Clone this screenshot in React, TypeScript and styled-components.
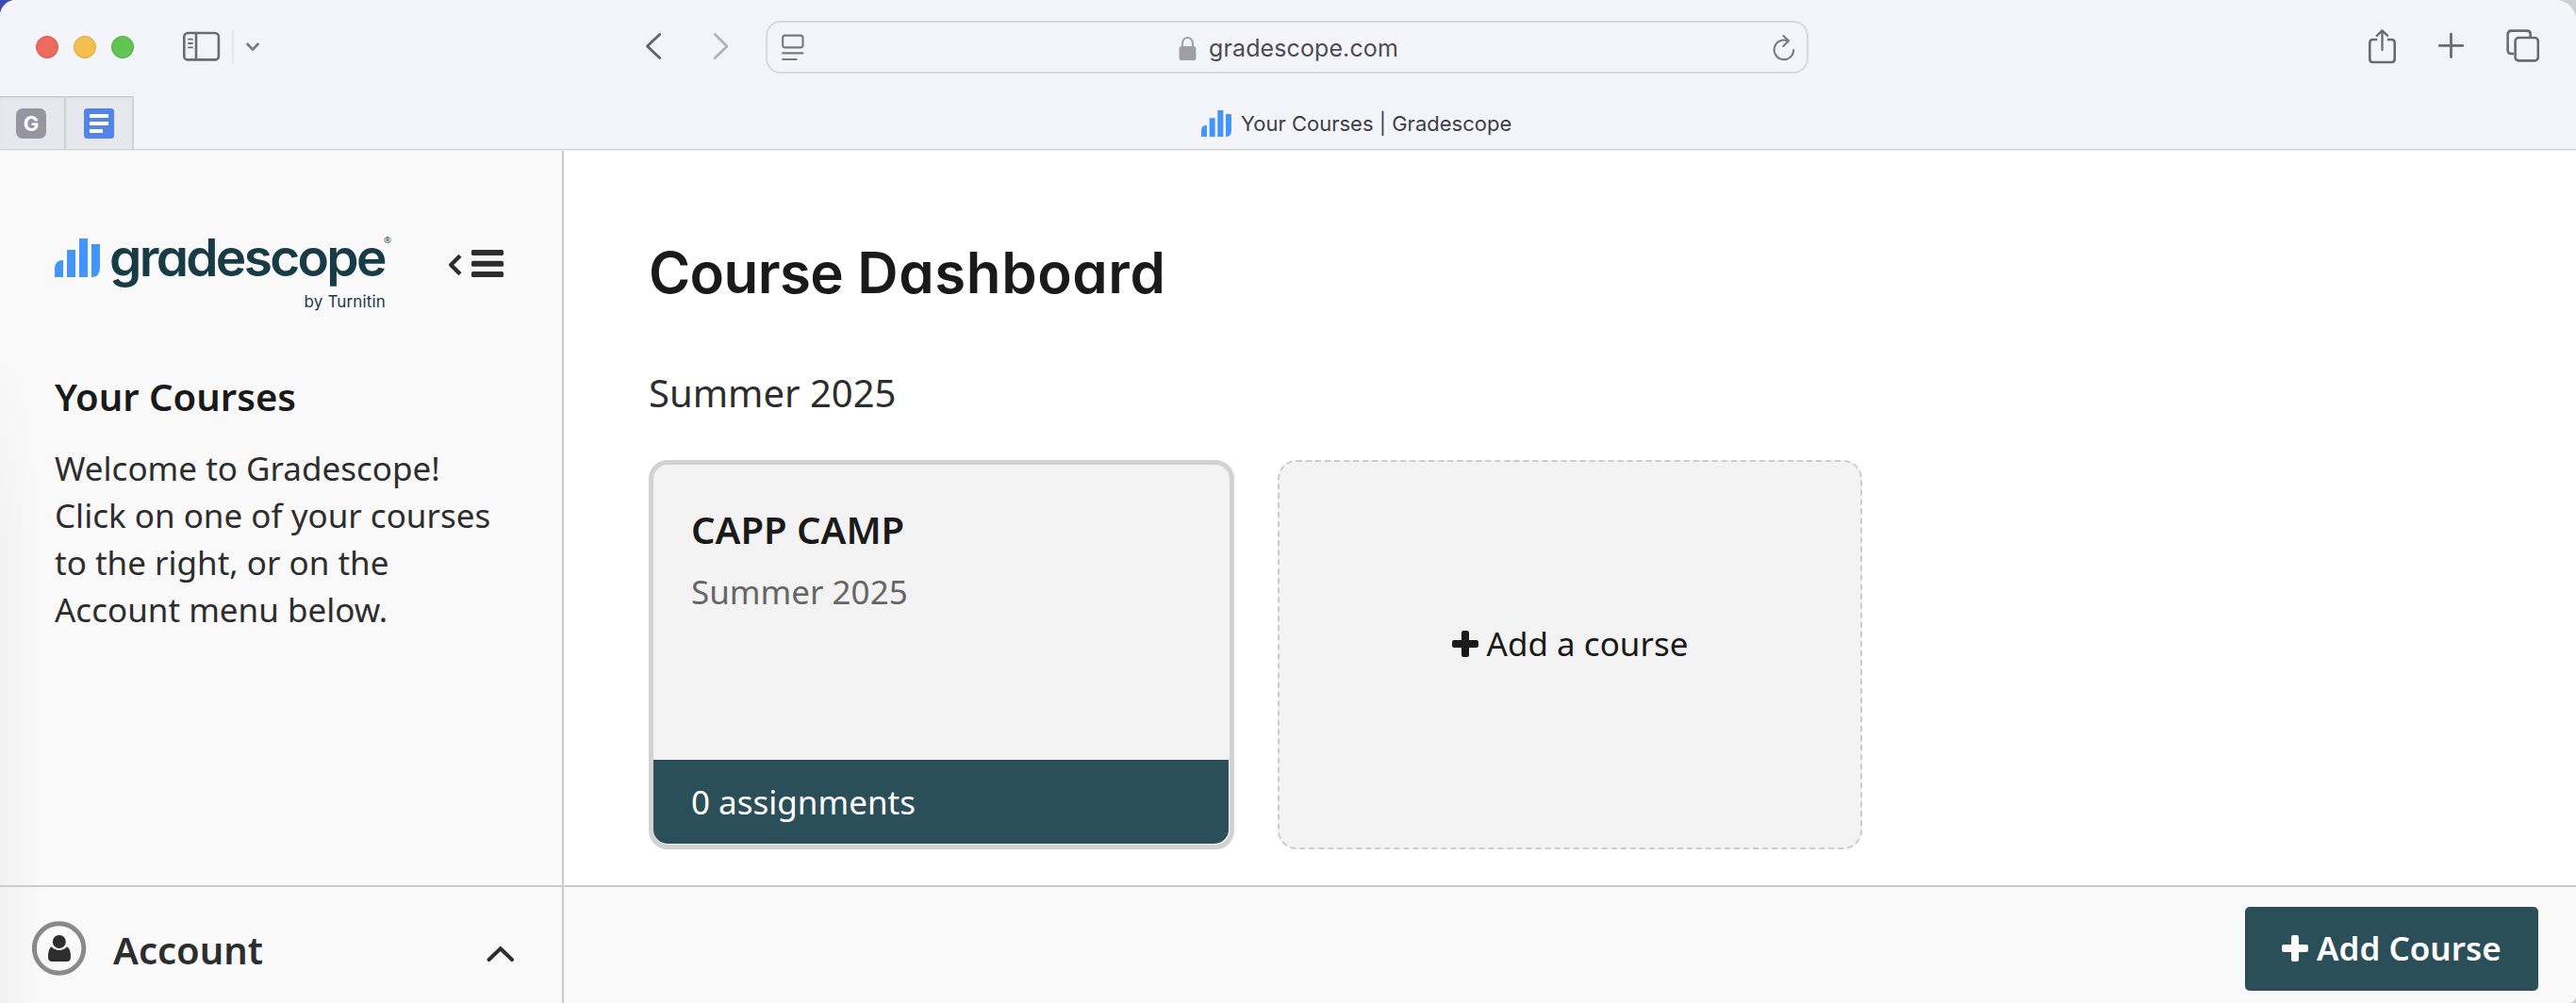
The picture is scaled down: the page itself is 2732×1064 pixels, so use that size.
import React from "react";
import styled, { createGlobalStyle } from "styled-components";

const teal = "#2b4f59";
const ink = "#1a1a1a";
const text = "#2d2d2d";
const line = "#cccccc";
const blue = "#4495fb";
const glyph = "#6b6b70";

const GlobalStyle = createGlobalStyle`
  *, *::before, *::after { box-sizing: border-box; }
  body {
    margin: 0;
    overflow: hidden;
    background: linear-gradient(to right, #4149b8 50%, #cfcfd3 50%);
    font-family: "Noto Sans", "Open Sans", sans-serif;
  }
  h1, h2, h3, p { margin: 0; }
  svg { display: block; flex: none; }
`;

const Window = styled.div`
  display: flex;
  flex-direction: column;
  width: 2732px;
  height: 1064px;
  overflow: hidden;
  background: #fff;
  border-radius: 17px 22px 8px 1px;
`;

const Chrome = styled.header`
  flex: none;
  height: 160px;
  background: #f4f5fb;
  border-bottom: 1px solid #ebecef;
  box-shadow: inset 0 -1px 0 #d2d3d7;
  font-family: Inter, "Liberation Sans", sans-serif;
`;

const Toolbar = styled.div`
  display: flex;
  align-items: center;
  height: 100px;
  padding: 0 37px 0 38px;
`;

const Lights = styled.div`
  display: flex;
  gap: 16px;
  width: 156px;
`;

const Light = styled.span<{ $fill: string; $edge: string }>`
  width: 24px;
  height: 24px;
  border-radius: 50%;
  background: ${(p) => p.$fill};
  border: 1px solid ${(p) => p.$edge};
`;

const Rule = styled.span`
  width: 2px;
  height: 36px;
  margin: 0 12px;
  background: #e6e7ec;
`;

const History = styled.div`
  display: flex;
  gap: 52px;
  margin: 0 40px 0 406px;
`;

const AddressBar = styled.div`
  display: flex;
  align-items: center;
  justify-content: space-between;
  width: 1106px;
  height: 56px;
  padding: 0 12px 0 15px;
  border: 2px solid #d8d9dd;
  border-radius: 16px;
`;

const Address = styled.div`
  display: flex;
  align-items: center;
  gap: 13px;
  color: #4c4c4e;
  font-size: 25px;
  line-height: 32px;
  letter-spacing: 0.1px;
`;

const AddressText = styled.span`
  padding-top: 2px;
`;

const Actions = styled.div`
  display: flex;
  gap: 44px;
  margin-left: auto;
`;

const TabStrip = styled.div`
  display: flex;
  height: 56px;
  margin-top: 2px;
`;

const PinnedTab = styled.div<{ $width: number }>`
  display: flex;
  align-items: center;
  width: ${(p) => p.$width}px;
  padding: 2px 0 0 18px;
  background: #e7e8ee;
  border-right: 2px solid #d3d4d9;
  box-shadow: inset 0 2px 2px -1px #b9babf;
`;

const LetterIcon = styled.span`
  display: grid;
  place-items: center;
  width: 32px;
  height: 32px;
  margin-left: -1px;
  border-radius: 7px;
  background: #9696a1;
  color: #fff;
  font-size: 22px;
  font-weight: 700;
  line-height: 32px;
`;

const ActiveTab = styled.div`
  display: flex;
  align-items: center;
  flex: 1;
  gap: 10px;
  padding: 2px 0 0 1132px;
  color: #3f3f43;
  font-size: 22px;
  font-weight: 400;
  line-height: 30px;
`;

const Body = styled.div`
  display: grid;
  grid-template-columns: 598px 1fr;
  grid-template-rows: 779px 125px;
  flex: 1;
`;

const Sidebar = styled.aside`
  padding: 85px 0 0 58px;
  border-right: 2px solid ${line};
  background: linear-gradient(to bottom, #f9f9f9 200px, rgba(249, 249, 249, 0) 420px),
    linear-gradient(to right, #f2f2f2, #f9f9f9 42px);
`;

const LogoRow = styled.div`
  display: flex;
  align-items: flex-start;
  height: 85px;
`;

const Bars = styled.svg`
  margin: 8px 10px 0 0;
`;

const Brand = styled.div`
  position: relative;
  display: flex;
  flex-direction: column;
  align-items: flex-end;
  width: 293px;
  margin-right: 65px;
  color: #183c46;
  font-family: Inter, "Liberation Sans", sans-serif;
  font-feature-settings: "cv11";
`;

const Wordmark = styled.span`
  align-self: flex-start;
  font-size: 55px;
  font-weight: 600;
  line-height: 56px;
  letter-spacing: -2.7px;
`;

const Registered = styled.span`
  position: absolute;
  top: 4px;
  right: -6px;
  font: 400 9.5px/12px "Noto Sans", sans-serif;
`;

const Byline = styled.span`
  margin-top: 9px;
  font-size: 17px;
  line-height: 20px;
  letter-spacing: 0.15px;
`;

const CollapseIcon = styled.svg`
  margin-top: 19px;
`;

const SidebarTitle = styled.h2`
  margin-top: 66px;
  color: ${ink};
  font-size: 40px;
  font-weight: 600;
  line-height: 50px;
`;

const SidebarText = styled.p`
  width: 490px;
  margin-top: 26px;
  color: ${text};
  font-size: 35px;
  line-height: 50px;
`;

const Main = styled.main`
  padding: 94px 0 0 90px;
`;

const PageTitle = styled.h1`
  color: ${ink};
  font-family: Inter, "Liberation Sans", sans-serif;
  font-feature-settings: "cv11";
  font-size: 60px;
  font-weight: 600;
  line-height: 70px;
`;

const Word = styled.span<{ $tracking: number }>`
  letter-spacing: ${(p) => p.$tracking}px;
`;

const Term = styled.h2`
  margin-top: 68px;
  color: ${text};
  font-size: 40px;
  font-weight: 400;
  line-height: 50px;
`;

const Courses = styled.div`
  display: flex;
  gap: 46px;
  margin-top: 46px;
`;

const CourseCard = styled.article`
  display: flex;
  flex-direction: column;
  width: 621px;
  height: 413px;
  padding: 44px 1px 1px 0;
  border: 5px solid #d2d2d2;
  border-radius: 20px;
  background: #f3f3f3;
`;

const CourseName = styled.h3`
  padding-left: 40px;
  color: ${ink};
  font-size: 40px;
  font-weight: 600;
  line-height: 50px;
`;

const CourseTerm = styled.p`
  margin-top: 16px;
  padding-left: 40px;
  color: #666;
  font-size: 35px;
  line-height: 50px;
`;

const CourseFooter = styled.div`
  height: 89px;
  margin-top: auto;
  padding-left: 40px;
  border-radius: 0 0 15px 15px;
  background: ${teal};
  color: #fff;
  font-size: 35px;
  line-height: 90px;
`;

const AddCard = styled.button`
  display: flex;
  align-items: center;
  justify-content: center;
  gap: 9px;
  width: 620px;
  height: 413px;
  padding: 0 0 23px;
  border: 2px dashed ${line};
  border-radius: 20px;
  background: #f3f3f3;
  color: ${ink};
  font: 400 35px/50px "Noto Sans", sans-serif;
`;

const AccountBar = styled.div`
  display: flex;
  align-items: flex-start;
  padding: 36px 51px 0 34px;
  border-top: 2px solid ${line};
  border-right: 2px solid ${line};
  background: linear-gradient(to right, #f2f2f2, #f9f9f9 42px);
`;

const AccountLabel = styled.span`
  flex: 1;
  padding: 6px 0 0 28px;
  color: ${text};
  font-size: 40px;
  font-weight: 600;
  line-height: 50px;
`;

const AccountChevron = styled.svg`
  margin-top: 26px;
`;

const ActionBar = styled.footer`
  display: flex;
  align-items: flex-start;
  justify-content: flex-end;
  padding: 21px 40px 0;
  border-top: 2px solid ${line};
  background: #f9f9f9;
`;

const PrimaryButton = styled.button`
  display: flex;
  align-items: center;
  gap: 9px;
  width: 311px;
  height: 89px;
  padding: 0 0 2px 39px;
  border: 0;
  border-radius: 5px;
  background: ${teal};
  color: #fff;
  font: 600 35px/50px "Noto Sans", sans-serif;
`;

const PlusGlyph = () => (
  <svg width="28" height="28" viewBox="0 0 28 28" fill="currentColor">
    <rect x="10" y="0" width="8" height="28" rx="2.2" />
    <rect x="0" y="10" width="28" height="8" rx="2.2" />
  </svg>
);

const barShapes = (
  <>
    <path d="M0 41V32Q0 23 9 23V41Z" />
    <path d="M13 12H22V41H13Z" />
    <path d="M26 0H35V41H26Z" />
    <path d="M39 6H48V31Q48 41 39 41Z" />
  </>
);

export default function App() {
  return (
    <>
      <GlobalStyle />
      <Window>
        <Chrome>
          <Toolbar>
            <Lights>
              <Light $fill="#ec6a5e" $edge="#d5574c" />
              <Light $fill="#f5bf4f" $edge="#d9a53c" />
              <Light $fill="#61c554" $edge="#4fa840" />
            </Lights>
            <svg width="40" height="36" viewBox="0 0 40 36" fill="none" stroke={glyph} strokeWidth="2.6">
              <rect x="1.3" y="3" width="36.6" height="28.4" rx="4" />
              <path d="M14 3V31.4" />
              <path d="M6 9.7H10M6 14H10M6 18.4H10" strokeWidth="1.8" strokeLinecap="round" />
            </svg>
            <Rule />
            <svg width="18" height="36" viewBox="0 0 18 36" fill="none" stroke="#7c7c82" strokeWidth="2.8" strokeLinecap="round" strokeLinejoin="round">
              <path d="M2.5 14.8L8 20.6L13.5 14.8" />
            </svg>
            <History>
              <svg width="18" height="36" viewBox="0 0 18 36" fill="none" stroke="#636368" strokeWidth="2.9" strokeLinecap="round" strokeLinejoin="round">
                <path d="M15.7 4.5L2.5 17L15.7 29.5" />
              </svg>
              <svg width="18" height="36" viewBox="0 0 18 36" fill="none" stroke="#b5b6bb" strokeWidth="2.9" strokeLinecap="round" strokeLinejoin="round">
                <path d="M4.3 4.5L17 17L4.3 29.5" />
              </svg>
            </History>
            <AddressBar>
              <svg width="24" height="36" viewBox="0 0 24 36" fill="none" stroke="#7a7a7e" strokeWidth="2.1" strokeLinecap="round">
                <rect x="1.1" y="5.6" width="21.4" height="12.8" rx="2.6" />
                <path d="M1.2 24.4H22.4M1.2 31H15.6" />
              </svg>
              <Address>
                <svg width="19" height="36" viewBox="0 0 19 36">
                  <path d="M4.1 18V13.5A5.4 5.4 0 0 1 14.9 13.5V18" fill="none" stroke="#a0a0a4" strokeWidth="2" />
                  <rect x="0.6" y="17" width="17.8" height="15" rx="2.6" fill="#9f9ea3" />
                </svg>
                <AddressText>gradescope.com</AddressText>
              </Address>
              <svg width="24" height="36" viewBox="0 0 24 36" fill="none" stroke="#7c7c80" strokeWidth="2.1" strokeLinecap="round" strokeLinejoin="round">
                <path d="M22.2 21A10.3 10.3 0 1 1 16 11.4" />
                <path d="M11.3 6L17 11.3L11.3 17" />
              </svg>
            </AddressBar>
            <Actions>
              <svg width="30" height="38" viewBox="0 0 30 38" fill="none" stroke={glyph} strokeWidth="2.6" strokeLinecap="round" strokeLinejoin="round">
                <path d="M10.2 11H5.6Q2.3 11 2.3 14.4V31.8Q2.3 35 5.6 35H25.4Q28.7 35 28.7 31.8V14.4Q28.7 11 25.4 11H20.8" strokeLinecap="butt" />
                <path d="M15.5 22V1.6M9.8 6.8L15.5 1.4L21.2 6.8" strokeWidth="2.3" />
              </svg>
              <svg width="28" height="38" viewBox="0 0 28 38" fill="none" stroke={glyph} strokeWidth="2.8" strokeLinecap="round">
                <path d="M14.5 5.2V29.6M2.3 17.4H26.7" />
              </svg>
              <svg width="38" height="38" viewBox="0 0 38 38" fill="none" stroke={glyph} strokeWidth="2.6">
                <path d="M9 26H6.3Q2.6 26 2.6 22.2V5.4Q2.6 1.6 6.3 1.6H23Q26.7 1.6 26.7 5.4V9" />
                <rect x="10.6" y="9" width="24.2" height="24.4" rx="3.6" />
              </svg>
            </Actions>
          </Toolbar>
          <TabStrip>
            <PinnedTab $width={70}>
              <LetterIcon>G</LetterIcon>
            </PinnedTab>
            <PinnedTab $width={72}>
              <svg width="34" height="32" viewBox="0 0 34 32">
                <rect x="1" width="32" height="32" rx="3.5" fill="#5384ec" />
                <path d="M7 6H27V10H7ZM7 14H27V18H7ZM7 22H21V26H7Z" fill="#fff" />
              </svg>
            </PinnedTab>
            <ActiveTab>
              <svg width="32" height="28" viewBox="0 0 48 41" preserveAspectRatio="none" fill={blue}>
                {barShapes}
              </svg>
              <span>Your Courses | Gradescope</span>
            </ActiveTab>
          </TabStrip>
        </Chrome>

        <Body>
          <Sidebar>
            <LogoRow>
              <Bars width="48" height="41" viewBox="0 0 48 41" fill={blue}>
                {barShapes}
              </Bars>
              <Brand>
                <Wordmark>gradescope</Wordmark>
                <Registered>®</Registered>
                <Byline>by Turnitin</Byline>
              </Brand>
              <CollapseIcon width="60" height="32" viewBox="0 0 60 32" fill={text}>
                <path d="M14 7.2L4.2 17L14 26.8" fill="none" stroke={text} strokeWidth="4.4" strokeLinejoin="round" />
                <rect x="26" y="1" width="34" height="6" rx="1.6" />
                <rect x="26" y="12.8" width="34" height="6" rx="1.6" />
                <rect x="26" y="24" width="34" height="6" rx="1.6" />
              </CollapseIcon>
            </LogoRow>
            <SidebarTitle>Your Courses</SidebarTitle>
            <SidebarText>
              Welcome to Gradescope! Click on one of your courses to the right, or on the Account menu below.
            </SidebarText>
          </Sidebar>

          <Main>
            <PageTitle>
              <Word $tracking={-0.6}>Course</Word> <Word $tracking={0.6}>Dashboard</Word>
            </PageTitle>
            <Term>Summer 2025</Term>
            <Courses>
              <CourseCard>
                <CourseName>CAPP CAMP</CourseName>
                <CourseTerm>Summer 2025</CourseTerm>
                <CourseFooter>0 assignments</CourseFooter>
              </CourseCard>
              <AddCard>
                <PlusGlyph />
                <span>Add a course</span>
              </AddCard>
            </Courses>
          </Main>

          <AccountBar>
            <svg width="58" height="58" viewBox="0 0 58 58">
              <circle cx="28.6" cy="29" r="26.2" fill="none" stroke="#8a8a8a" strokeWidth="5" />
              <path d="M20.5 27.2Q24 31 28.8 31T37 27.2Q41 29.5 41 38Q41 43 37 43H21Q17 43 17 38Q17 29.5 20.5 27.2Z" fill={text} />
              <circle cx="28.8" cy="22" r="7" fill={text} />
            </svg>
            <AccountLabel>Account</AccountLabel>
            <AccountChevron width="29" height="18" viewBox="0 0 29 18" fill="none" stroke={text} strokeWidth="4" strokeLinecap="round">
              <path d="M2.6 15L14.8 3.2L27 15" />
            </AccountChevron>
          </AccountBar>

          <ActionBar>
            <PrimaryButton>
              <PlusGlyph />
              <span>Add Course</span>
            </PrimaryButton>
          </ActionBar>
        </Body>
      </Window>
    </>
  );
}
